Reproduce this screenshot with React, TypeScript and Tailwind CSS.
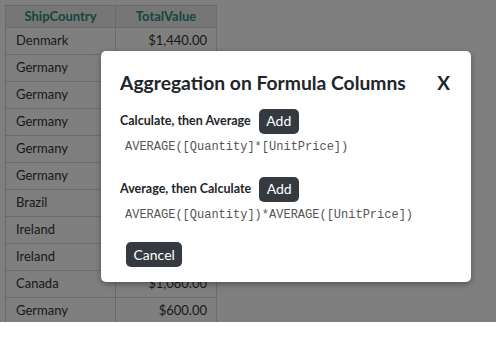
const rows: [string, string][] = [
  ["Denmark", "$1,440.00"],
  ["Germany", "$1,863.40"],
  ["Germany", "$1,552.60"],
  ["Germany", "$654.06"],
  ["Germany", "$3,597.90"],
  ["Germany", "$1,444.80"],
  ["Brazil", "$556.62"],
  ["Ireland", "$2,490.50"],
  ["Ireland", "$517.80"],
  ["Canada", "$1,080.00"],
  ["Germany", "$600.00"],
];

function Grid() {
  return (
    <div className="pt-[5px] pl-[5px]">
      <table className="border-collapse text-[13px] text-[#333]" style={{ fontFamily: "Lato, 'Open Sans', sans-serif" }}>
        <thead>
          <tr className="bg-[#ececec] h-[22px]">
            <th className="border border-[#d4d4d4] w-[110px] font-bold text-[#2a8c84] text-center p-0">ShipCountry</th>
            <th className="border border-[#d4d4d4] w-[101px] font-bold text-[#2a8c84] text-center p-0">TotalValue</th>
          </tr>
        </thead>
        <tbody>
          {rows.map(([c, v], i) => (
            <tr key={i} className="h-[27px] bg-white">
              <td className="border border-[#d4d4d4] pl-[10px]">{c}</td>
              <td className="border border-[#d4d4d4] pr-[9px] text-right">{v}</td>
            </tr>
          ))}
        </tbody>
      </table>
    </div>
  );
}

function DarkButton({ children }: { children: string }) {
  return (
    <button className="bg-[#343a40] text-white text-[14px] leading-none rounded-[5px] px-[7.5px] h-[25px]">
      {children}
    </button>
  );
}

const mono = { fontFamily: "'Liberation Mono', monospace" };

export default function App() {
  return (
    <div className="w-[496px] h-[346px] bg-white" style={{ fontFamily: "Lato, 'Open Sans', sans-serif" }}>
      <div className="relative h-[322px] overflow-hidden">
        <Grid />
        <div className="absolute inset-0 bg-black/50" />
        <div className="absolute left-[101px] top-[51px] w-[370px] h-[231px] bg-white rounded-[5px] shadow-[0_2px_6px_rgba(0,0,0,0.35)] pl-[19px] pr-[20px] pt-[18px] text-[#212529]">
          <div className="flex items-center justify-between">
            <h2 className="text-[19.3px] font-bold leading-[26px]">Aggregation on Formula Columns</h2>
            <span className="text-[19px] font-bold mr-[1px]">X</span>
          </div>
          <div className="mt-[11px] flex items-center gap-[8px]">
            <span className="text-[12.5px] font-bold">Calculate, then Average</span>
            <DarkButton>Add</DarkButton>
          </div>
          <div className="mt-[4px] pl-[5px] text-[12px] text-[#555]" style={mono}>
            AVERAGE([Quantity]*[UnitPrice])
          </div>
          <div className="mt-[21px] flex items-center gap-[8px]">
            <span className="text-[12.5px] font-bold">Average, then Calculate</span>
            <DarkButton>Add</DarkButton>
          </div>
          <div className="mt-[4px] pl-[5px] text-[12px] text-[#555]" style={mono}>
            AVERAGE([Quantity])*AVERAGE([UnitPrice])
          </div>
          <div className="mt-[18px] pl-[6px]">
            <DarkButton>Cancel</DarkButton>
          </div>
        </div>
      </div>
    </div>
  );
}
